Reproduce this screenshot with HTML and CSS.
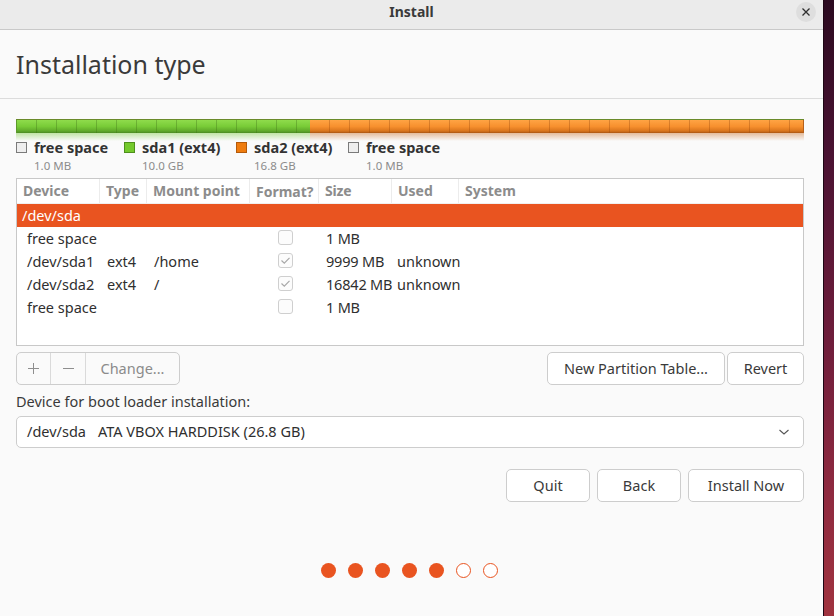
FILE: index.html
```html
<!DOCTYPE html>
<html>
<head>
<meta charset="utf-8">
<link rel="stylesheet" href="styles.css">
</head>
<body>
<div class="screen">
  <div class="window">
    <div class="titlebar">
      <span class="title">Install</span>
      <span class="close"><svg width="10" height="10" viewBox="0 0 10 10"><path d="M1.5 1.5 L8.5 8.5 M8.5 1.5 L1.5 8.5" stroke="#2e2e2e" stroke-width="1.3"/></svg></span>
    </div>
    <div class="header"><h1>Installation type</h1></div>
    <div class="content">
      <div class="pbar">
        <div class="seg green" style="width:294px"></div>
        <div class="seg orange"></div>
      </div>
      <div class="reflect">
        <div class="rseg rgreen" style="width:294px"></div>
        <div class="rseg rorange"></div>
      </div>
      <div class="legend">
        <div class="litem w1"><div class="lrow"><span class="sw sw-free"></span><b>free space</b></div><div class="lsub">1.0 MB</div></div>
        <div class="litem"><div class="lrow"><span class="sw sw-green"></span><b>sda1 (ext4)</b></div><div class="lsub">10.0 GB</div></div>
        <div class="litem"><div class="lrow"><span class="sw sw-orange"></span><b>sda2 (ext4)</b></div><div class="lsub">16.8 GB</div></div>
        <div class="litem"><div class="lrow"><span class="sw sw-free"></span><b>free space</b></div><div class="lsub">1.0 MB</div></div>
      </div>
      <div class="table">
        <div class="row head">
          <div class="c c1">Device</div><div class="c c2">Type</div><div class="c c3">Mount point</div><div class="c c4">Format?</div><div class="c c5">Size</div><div class="c c6">Used</div><div class="c c7">System</div>
        </div>
        <div class="row sel"><div class="c csel">/dev/sda</div></div>
        <div class="row">
          <div class="c c1 d">free space</div><div class="c c2"></div><div class="c c3"></div><div class="c c4"><span class="cb"></span></div><div class="c c5">1 MB</div><div class="c c6"></div><div class="c c7"></div>
        </div>
        <div class="row">
          <div class="c c1 d">/dev/sda1</div><div class="c c2">ext4</div><div class="c c3">/home</div><div class="c c4"><span class="cb"><svg width="11" height="9" viewBox="0 0 11 9"><path d="M1.5 4.5 L4.3 7.2 L9.5 1.8" fill="none" stroke="#a8a8a8" stroke-width="1.2"/></svg></span></div><div class="c c5">9999 MB</div><div class="c c6 u">unknown</div><div class="c c7"></div>
        </div>
        <div class="row">
          <div class="c c1 d">/dev/sda2</div><div class="c c2">ext4</div><div class="c c3">/</div><div class="c c4"><span class="cb"><svg width="11" height="9" viewBox="0 0 11 9"><path d="M1.5 4.5 L4.3 7.2 L9.5 1.8" fill="none" stroke="#a8a8a8" stroke-width="1.2"/></svg></span></div><div class="c c5">16842 MB</div><div class="c c6 u">unknown</div><div class="c c7"></div>
        </div>
        <div class="row">
          <div class="c c1 d">free space</div><div class="c c2"></div><div class="c c3"></div><div class="c c4"><span class="cb"></span></div><div class="c c5">1 MB</div><div class="c c6"></div><div class="c c7"></div>
        </div>
      </div>
      <div class="tools">
        <div class="group">
          <span class="gb gplus"><svg width="13" height="13" viewBox="0 0 13 13"><path d="M6.5 1 V12 M1 6.5 H12" stroke="#8e8e8e" stroke-width="1"/></svg></span>
          <span class="gb gminus"><svg width="13" height="13" viewBox="0 0 13 13"><path d="M1 6.5 H12" stroke="#8e8e8e" stroke-width="1"/></svg></span>
          <span class="gb gchange">Change...</span>
        </div>
        <div class="spacer"></div>
        <span class="btn bnew">New Partition Table...</span>
        <span class="btn brevert">Revert</span>
      </div>
      <div class="label">Device for boot loader installation:</div>
      <div class="combo">
        <span><span class="dev">/dev/sda</span>ATA VBOX HARDDISK (26.8 GB)</span>
        <svg width="12" height="8" viewBox="0 0 12 8"><path d="M1.5 2 L6 6 L10.5 2" fill="none" stroke="#555" stroke-width="1.1"/></svg>
      </div>
      <div class="actions">
        <span class="btn bquit">Quit</span>
        <span class="btn bback">Back</span>
        <span class="btn binstall">Install Now</span>
      </div>
      <div class="dots">
        <span class="dot on"></span><span class="dot on"></span><span class="dot on"></span><span class="dot on"></span><span class="dot on"></span><span class="dot off"></span><span class="dot off"></span>
      </div>
    </div>
  </div>
  <div class="desktop"></div>
</div>
</body>
</html>
```

FILE: styles.css
```css
* { box-sizing: border-box; }
html, body { margin: 0; padding: 0; }
body {
  width: 834px;
  height: 616px;
  overflow: hidden;
  font-family: "Noto Sans", "Open Sans", sans-serif;
  font-size: 14.5px;
  color: #3c3c3c;
}
.screen { display: flex; width: 834px; height: 616px; }
.window {
  width: 823px;
  height: 616px;
  background: #fafafa;
  display: flex;
  flex-direction: column;
}
.desktop {
  flex: 1;
  border-left: 1px solid #1d0614;
  background: linear-gradient(180deg, #2b0a20 0%, #4a1232 25%, #6e1d3b 55%, #8f2a40 80%, #a0333f 100%);
}
.titlebar {
  height: 30px;
  background: #ebebeb;
  border-bottom: 1px solid #c9c9c9;
  display: flex;
  align-items: center;
  justify-content: center;
  position: relative;
}
.title { font-weight: bold; font-size: 14px; color: #3a3a3a; margin-top: -6px; }
.close {
  position: absolute;
  left: 796px;
  top: 2px;
  width: 20px;
  height: 20px;
  border-radius: 50%;
  background: #dedede;
  display: flex;
  align-items: center;
  justify-content: center;
}
.header {
  height: 69px;
  border-bottom: 1px solid #dcdcdc;
  display: flex;
  align-items: center;
  padding-left: 16px;
}
h1 {
  margin: 0;
  font-weight: normal;
  font-size: 25px;
  color: #3a3a3a;
  margin-top: -1px;
}
.content { padding: 20px 19px 0 16px; }
.pbar {
  display: flex;
  height: 14px;
  border-top: 1px solid #6a8a2a;
}
.seg { height: 13px; }
.green {
  background-image:
    linear-gradient(90deg, transparent 19px, rgba(60,110,20,0.35) 19px),
    linear-gradient(180deg, #8fdc4c 0%, #78cb37 50%, #5fa82a 85%, #4a8a22 100%);
  background-size: 20px 100%, 100% 100%;
  border-left: 1px solid #5c9a2a;
}
.orange {
  flex: 1;
  background-image:
    linear-gradient(90deg, transparent 19px, rgba(150,70,10,0.35) 19px),
    linear-gradient(180deg, #ffa444 0%, #f7902e 50%, #d8741c 85%, #a95512 100%);
  background-size: 20px 100%, 100% 100%;
  border-right: 1px solid #b6601a;
}
.reflect { display: flex; height: 8px; }
.rseg { height: 8px; }
.rgreen { background: linear-gradient(180deg, rgba(120,200,60,0.45), rgba(250,250,250,0)); }
.rorange { flex: 1; background: linear-gradient(180deg, rgba(200,110,40,0.45), rgba(250,250,250,0)); }
.legend {
  display: flex;
  height: 37px;
  margin-top: -2px;
  margin-bottom: 2px;
}
.litem { width: 112px; }
.litem.w1 { width: 108px; }
.lrow { display: flex; align-items: center; height: 16px; }
.lrow b { font-size: 14.5px; line-height: 16px; color: #333; }
.sw {
  width: 11px;
  height: 11px;
  margin-right: 7px;
  border: 1px solid #777;
}
.sw-free { background: #eeeeee; border-color: #7a7a7a; }
.sw-green { background: #74c92c; border-color: #4e8f1c; }
.sw-orange { background: #ef7c0f; border-color: #b45a0a; }
.lsub { font-size: 11.5px; color: #8c8c8c; padding-left: 18px; line-height: 14px; margin-top: 4px; }
.table {
  height: 168px;
  border: 1px solid #c8c8c8;
  background: #ffffff;
}
.row {
  display: grid;
  grid-template-columns: 83px 47px 103px 69px 73px 67px 1fr;
  height: 23px;
  align-items: center;
  padding-bottom: 2px;
}
.row.head { height: 25px; border-bottom: 1px solid #f0f0f0; padding-bottom: 0; }
.head .c {
  font-weight: bold;
  color: #8c8c8c;
  font-size: 14px;
  border-right: 1px solid #ececec;
  height: 24px;
  line-height: 23px;
  padding-left: 6px;
}
.head .c7 { border-right: 0; }
.c { padding-left: 7px; white-space: nowrap; color: #2f2f2f; line-height: 20px; }
.c.d { padding-left: 10px; }
.c.u { padding-left: 5px; }
.c5 { letter-spacing: -0.2px; }
.row.sel {
  display: block;
  background: #e95420;
  height: 23px;
  padding-bottom: 0;
}
.csel { color: #ffffff; padding-left: 5px; line-height: 22px; }
.c4 { padding-left: 28px; display: flex; align-items: center; }
.cb {
  width: 15px;
  height: 15px;
  border: 1px solid #cfcfcf;
  border-radius: 3px;
  background: #fcfcfc;
  display: flex;
  align-items: center;
  justify-content: center;
}
.tools {
  display: flex;
  margin-top: 6px;
  height: 33px;
}
.spacer { flex: 1; }
.group {
  display: flex;
  border: 1px solid #cdcdcd;
  border-radius: 5px;
  background: #fafafa;
  height: 33px;
}
.gb {
  display: flex;
  align-items: center;
  justify-content: center;
  height: 31px;
  color: #8b8b8b;
  padding-bottom: 2px;
}
.gplus, .gminus { padding-bottom: 0; }
.gplus { width: 34px; border-right: 1px solid #dadada; }
.gminus { width: 35px; border-right: 1px solid #dadada; }
.gchange { width: 93px; }
.btn {
  display: flex;
  align-items: center;
  justify-content: center;
  height: 33px;
  border: 1px solid #cdcdcd;
  border-radius: 5px;
  background: #ffffff;
  color: #3a3a3a;
  flex: none;
  padding-bottom: 2px;
}
.bnew { width: 178px; margin-right: 2px; }
.brevert { width: 77px; }
.label {
  margin-top: 6px;
  height: 25px;
  line-height: 20px;
  color: #3a3a3a;
}
.combo {
  height: 32px;
  border: 1px solid #cdcdcd;
  border-radius: 5px;
  background: #ffffff;
  display: flex;
  align-items: center;
  justify-content: space-between;
  padding: 0 13px 2px 10px;
  color: #2f2f2f;
}
.combo svg { margin-top: 2px; }
.dev { margin-right: 12px; }
.actions {
  display: flex;
  justify-content: flex-end;
  gap: 7px;
  margin-top: 21px;
}
.bquit, .bback { width: 84px; }
.binstall { width: 116px; }
.dots {
  display: flex;
  justify-content: center;
  gap: 12px;
  margin-top: 61px;
  padding-right: 2px;
}
.dot {
  width: 15px;
  height: 15px;
  border-radius: 50%;
}
.dot.on { background: #e95420; }
.dot.off { background: #ffffff; border: 1.5px solid #e95420; }
```
